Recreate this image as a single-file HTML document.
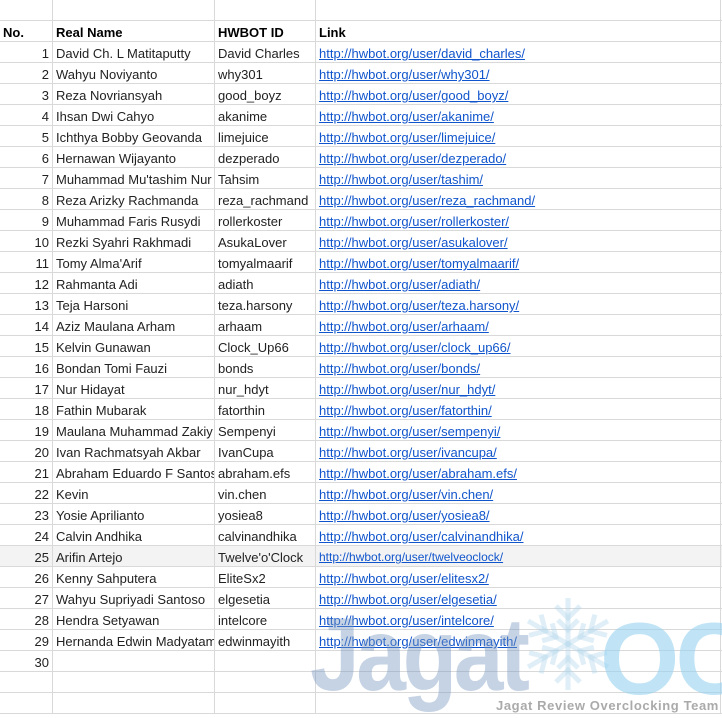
<!DOCTYPE html>
<html><head><meta charset="utf-8"><style>
body{margin:0;width:722px;height:714px;overflow:hidden;background:#fff;font-family:"Liberation Sans",Arial,sans-serif;font-size:13px;color:#222;position:relative}
.r{position:absolute;left:0;width:722px;height:21px;border-bottom:1px solid #d9d9d9;box-sizing:border-box}
.c{position:absolute;top:1px;height:21px;line-height:21px;white-space:nowrap;overflow:hidden;padding-left:3px;box-sizing:border-box}
.a{left:0;width:52px;text-align:right;padding-right:3px;padding-left:0}
.b{left:53px;width:161px}
.d{left:215px;width:100px}
.e{left:316px;width:406px;color:#1155cc;text-decoration:underline}
.h .c{font-weight:bold;color:#000}
.v{position:absolute;top:0;width:1px;height:714px;background:#d9d9d9}
.wm{position:absolute;font-weight:bold;white-space:nowrap}
</style></head><body>
<div class="r" style="top:0"></div>
<div class="r h" style="top:21px"><div class="c a" style="text-align:left;padding-left:3px">No.</div><div class="c b">Real Name</div><div class="c d">HWBOT ID</div><div class="c e" style="color:#000;text-decoration:none">Link</div></div>
<div id="rows"></div>
<div class="v" style="left:52px"></div><div class="v" style="left:214px"></div><div class="v" style="left:315px"></div><div class="v" style="left:720px"></div>
<div class="wm" style="left:310px;top:596px;font-size:104px;color:rgba(120,150,190,0.42);letter-spacing:-4px;transform:scaleX(0.86);transform-origin:0 0">Jagat</div>
<svg class="wm" style="left:518px;top:594px" width="100" height="100" viewBox="-50 -50 100 100"><g stroke="rgba(175,212,235,0.4)" stroke-width="5" fill="none"><g id="arm"><line x1="0" y1="0" x2="0" y2="-46"/><polyline points="-12,-38 0,-26 12,-38"/><polyline points="-10,-24 0,-14 10,-24"/></g><use href="#arm" transform="rotate(60)"/><use href="#arm" transform="rotate(120)"/><use href="#arm" transform="rotate(180)"/><use href="#arm" transform="rotate(240)"/><use href="#arm" transform="rotate(300)"/></g></svg>
<div class="wm" style="left:600px;top:601px;font-size:102px;color:rgba(150,210,240,0.6);letter-spacing:-4px">OC</div>
<div class="wm" style="left:496px;top:698px;font-size:13px;color:#aaa;letter-spacing:0.6px">Jagat Review Overclocking Team</div>
<script>
var d=[["David Ch. L Matitaputty","David Charles","david_charles"],["Wahyu Noviyanto","why301","why301"],["Reza Novriansyah","good_boyz","good_boyz"],["Ihsan Dwi Cahyo","akanime","akanime"],["Ichthya Bobby Geovanda","limejuice","limejuice"],["Hernawan Wijayanto","dezperado","dezperado"],["Muhammad Mu'tashim Nur","Tahsim","tashim"],["Reza Arizky Rachmanda","reza_rachmand","reza_rachmand"],["Muhammad Faris Rusydi","rollerkoster","rollerkoster"],["Rezki Syahri Rakhmadi","AsukaLover","asukalover"],["Tomy Alma'Arif","tomyalmaarif","tomyalmaarif"],["Rahmanta Adi","adiath","adiath"],["Teja Harsoni","teza.harsony","teza.harsony"],["Aziz Maulana Arham","arhaam","arhaam"],["Kelvin Gunawan","Clock_Up66","clock_up66"],["Bondan Tomi Fauzi","bonds","bonds"],["Nur Hidayat","nur_hdyt","nur_hdyt"],["Fathin Mubarak","fatorthin","fatorthin"],["Maulana Muhammad Zakiy","Sempenyi","sempenyi"],["Ivan Rachmatsyah Akbar","IvanCupa","ivancupa"],["Abraham Eduardo F Santoso","abraham.efs","abraham.efs"],["Kevin","vin.chen","vin.chen"],["Yosie Aprilianto","yosiea8","yosiea8"],["Calvin Andhika","calvinandhika","calvinandhika"],["Arifin Artejo","Twelve'o'Clock","twelveoclock"],["Kenny Sahputera","EliteSx2","elitesx2"],["Wahyu Supriyadi Santoso","elgesetia","elgesetia"],["Hendra Setyawan","intelcore","intelcore"],["Hernanda Edwin Madyatama","edwinmayith","edwinmayith"]];
var h="";
for(var i=0;i<32;i++){var t=42+i*21;var x=d[i];
if(x){h+='<div class="r" style="top:'+t+'px'+(i==24?';background:#f3f3f3':'')+'"><div class="c a">'+(i+1)+'</div><div class="c b">'+x[0]+'</div><div class="c d">'+x[1]+'</div><div class="c e"'+(i==24?' style="font-size:12px"':'')+'>http://hwbot.org/user/'+x[2]+'/</div></div>';}
else h+='<div class="r" style="top:'+t+'px"><div class="c a">'+(i==29?'30':'')+'</div></div>';}
document.getElementById("rows").innerHTML=h;
</script>
</body></html>
